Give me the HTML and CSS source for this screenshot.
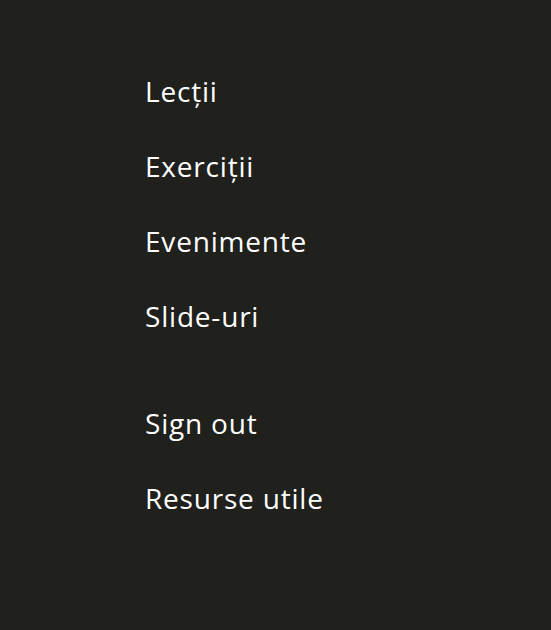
FILE: index.html
```html
<!DOCTYPE html>
<html lang="ro">
<head>
<meta charset="utf-8">
<link rel="stylesheet" href="styles.css">
</head>
<body>
<nav class="menu">
  <ul class="group">
    <li><a href="#">Lecții</a></li>
    <li><a href="#">Exerciții</a></li>
    <li><a href="#">Evenimente</a></li>
    <li><a href="#">Slide-uri</a></li>
  </ul>
  <ul class="group">
    <li><a href="#">Sign out</a></li>
    <li><a href="#">Resurse utile</a></li>
  </ul>
</nav>
</body>
</html>
```
FILE: styles.css
```css
html, body {
  margin: 0;
  padding: 0;
  background: #20201c;
  height: 100%;
}
.menu {
  padding: 54px 0 0 145px;
  font-family: "Open Sans", "Noto Sans", sans-serif;
  font-size: 28px;
  letter-spacing: 0.8px;
}
.group {
  list-style: none;
  margin: 0;
  padding: 0;
}
.group + .group {
  margin-top: 32px;
}
.group li {
  height: 75px;
  line-height: 75px;
}
.group a {
  color: #ffffff;
  text-decoration: none;
}
```
